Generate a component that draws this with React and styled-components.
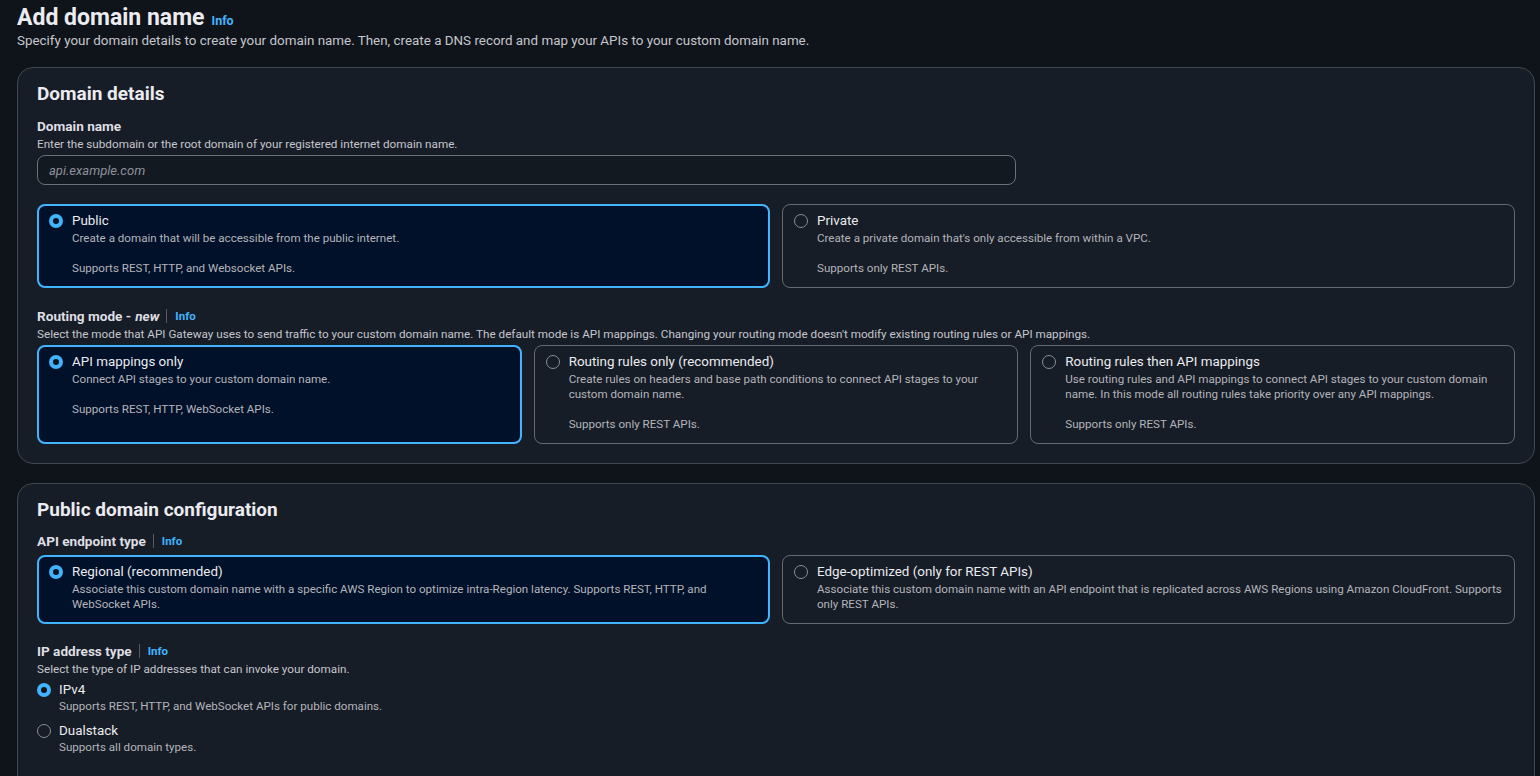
import styled, { createGlobalStyle } from "styled-components";

const GlobalStyle = createGlobalStyle`
  body {
    margin: 0;
    background: #0f141a;
    font-family: Roboto, "Liberation Sans", sans-serif;
    color: #dedee3;
  }
`;

const Page = styled.div`
  padding: 4px 5px 0 17px;
  height: 776px;
  box-sizing: border-box;
  overflow: hidden;
`;

const TitleRow = styled.div`
  display: flex;
  align-items: baseline;
  gap: 7px;
`;

const PageTitle = styled.h1`
  margin: 0;
  font-size: 23px;
  line-height: 28px;
  font-weight: 700;
  color: #ebebf0;
`;

const InfoLink = styled.a`
  font-size: ${(p) => p.$size || 11.5}px;
  font-weight: 700;
  color: #42b4ff;
  text-decoration: none;
`;

const PageDesc = styled.p`
  margin: 1px 0 0;
  font-size: 13.4px;
  line-height: 16px;
  color: #c6c6cd;
`;

const Container = styled.section`
  margin-top: ${(p) => p.$top || 20}px;
  border: 1px solid #424650;
  border-radius: 16px;
  background: #161d26;
  padding: 14px 19px ${(p) => p.$bottom || 19}px;
`;

const Heading = styled.h2`
  margin: 0;
  font-size: 19px;
  line-height: 24px;
  font-weight: 700;
  color: #ebebf0;
`;

const Field = styled.div`
  margin-top: ${(p) => p.$top}px;
`;

const Label = styled.div`
  display: flex;
  align-items: center;
  font-size: 13.6px;
  line-height: 16px;
  font-weight: 700;
  color: #dedee3;

  em {
    font-style: italic;
    margin-left: 4px;
  }
`;

const Divider = styled.span`
  width: 1px;
  height: 14px;
  background: #545b64;
  margin: 0 8px 0 7px;
`;

const Hint = styled.div`
  margin-top: 3px;
  font-size: 11.7px;
  line-height: 14px;
  color: #c6c6cd;
`;

const Input = styled.div`
  margin-top: 4px;
  width: 979px;
  height: 30px;
  box-sizing: border-box;
  border: 1px solid #6c7079;
  border-radius: 8px;
  background: #131920;
  padding: 0 11px;
  display: flex;
  align-items: center;
  font-size: 13px;
  font-style: italic;
  color: #8d9099;
`;

const Tiles = styled.div`
  margin-top: ${(p) => p.$top}px;
  display: grid;
  grid-template-columns: repeat(${(p) => p.$cols}, 1fr);
  gap: 12px;
`;

const Tile = styled.div`
  display: grid;
  grid-template-columns: 14px 1fr;
  column-gap: 9px;
  align-items: start;
  border-radius: 8px;
  border: ${(p) => (p.$on ? "2px solid #42b4ff" : "1px solid #656871")};
  background: ${(p) => (p.$on ? "#001129" : "transparent")};
  padding: ${(p) => (p.$on ? "7px 10px 10px" : "8px 11px 11px")};
`;

const Radio = styled.span`
  width: 14px;
  height: 14px;
  box-sizing: border-box;
  border-radius: 50%;
  margin-top: 1px;
  border: ${(p) => (p.$on ? "4px solid #42b4ff" : "1.5px solid #8c8c94")};
  background: ${(p) => (p.$on ? "#0f141a" : "transparent")};
`;

const OptTitle = styled.div`
  font-size: 13.4px;
  line-height: 16px;
  color: #ebebf0;
`;

const OptDesc = styled.div`
  margin-top: ${(p) => p.$top ?? 2}px;
  font-size: 11.6px;
  line-height: 15px;
  color: #b4b4bb;
`;

const RadioList = styled.div`
  margin-top: 6px;
  display: flex;
  flex-direction: column;
  gap: 9px;
`;

const RadioItem = styled.div`
  display: grid;
  grid-template-columns: 14px 1fr;
  column-gap: 8px;
  align-items: start;
`;

const LabelInfo = ({ children }) => (
  <Label>
    {children}
    <Divider />
    <InfoLink href="#">Info</InfoLink>
  </Label>
);

const Option = ({ on, title, desc, extra }) => (
  <Tile $on={on}>
    <Radio $on={on} />
    <div>
      <OptTitle>{title}</OptTitle>
      <OptDesc>{desc}</OptDesc>
      {extra && <OptDesc $top={15}>{extra}</OptDesc>}
    </div>
  </Tile>
);

export default function App() {
  return (
    <>
      <GlobalStyle />
      <Page>
        <TitleRow>
          <PageTitle>Add domain name</PageTitle>
          <InfoLink href="#" $size={12.5}>Info</InfoLink>
        </TitleRow>
        <PageDesc>
          Specify your domain details to create your domain name. Then, create a DNS record and map your APIs to your custom domain name.
        </PageDesc>

        <Container $top={18}>
          <Heading>Domain details</Heading>
          <Field $top={12}>
            <Label>Domain name</Label>
            <Hint>Enter the subdomain or the root domain of your registered internet domain name.</Hint>
            <Input>api.example.com</Input>
          </Field>
          <Tiles $cols={2} $top={19}>
            <Option
              on
              title="Public"
              desc="Create a domain that will be accessible from the public internet."
              extra="Supports REST, HTTP, and Websocket APIs."
            />
            <Option
              title="Private"
              desc="Create a private domain that's only accessible from within a VPC."
              extra="Supports only REST APIs."
            />
          </Tiles>
          <Field $top={20}>
            <LabelInfo>
              Routing mode -<em>new</em>
            </LabelInfo>
            <Hint>
              Select the mode that API Gateway uses to send traffic to your custom domain name. The default mode is API mappings. Changing your routing mode doesn't modify existing routing rules or API mappings.
            </Hint>
          </Field>
          <Tiles $cols={3} $top={4}>
            <Option
              on
              title="API mappings only"
              desc="Connect API stages to your custom domain name."
              extra="Supports REST, HTTP, WebSocket APIs."
            />
            <Option
              title="Routing rules only (recommended)"
              desc="Create rules on headers and base path conditions to connect API stages to your custom domain name."
              extra="Supports only REST APIs."
            />
            <Option
              title="Routing rules then API mappings"
              desc="Use routing rules and API mappings to connect API stages to your custom domain name. In this mode all routing rules take priority over any API mappings."
              extra="Supports only REST APIs."
            />
          </Tiles>
        </Container>

        <Container $top={19} $bottom={40}>
          <Heading>Public domain configuration</Heading>
          <Field $top={11}>
            <LabelInfo>API endpoint type</LabelInfo>
          </Field>
          <Tiles $cols={2} $top={6}>
            <Option
              on
              title="Regional (recommended)"
              desc="Associate this custom domain name with a specific AWS Region to optimize intra-Region latency. Supports REST, HTTP, and WebSocket APIs."
            />
            <Option
              title="Edge-optimized (only for REST APIs)"
              desc="Associate this custom domain name with an API endpoint that is replicated across AWS Regions using Amazon CloudFront. Supports only REST APIs."
            />
          </Tiles>
          <Field $top={19}>
            <LabelInfo>IP address type</LabelInfo>
            <Hint>Select the type of IP addresses that can invoke your domain.</Hint>
          </Field>
          <RadioList>
            <RadioItem>
              <Radio $on />
              <div>
                <OptTitle>IPv4</OptTitle>
                <OptDesc $top={1}>Supports REST, HTTP, and WebSocket APIs for public domains.</OptDesc>
              </div>
            </RadioItem>
            <RadioItem>
              <Radio />
              <div>
                <OptTitle>Dualstack</OptTitle>
                <OptDesc $top={1}>Supports all domain types.</OptDesc>
              </div>
            </RadioItem>
          </RadioList>
        </Container>
      </Page>
    </>
  );
}
